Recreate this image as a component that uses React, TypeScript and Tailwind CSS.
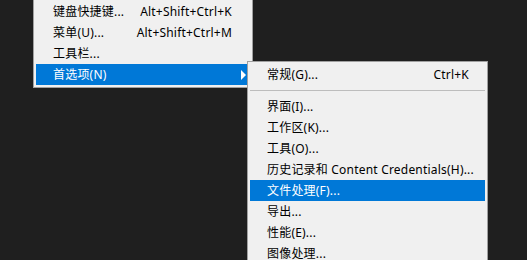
import React from 'react';

interface Item {
  label: string;
  shortcut?: string;
  active?: boolean;
  submenu?: boolean;
  separator?: boolean;
}

const mainItems: Item[] = [
  { label: '键盘快捷键...', shortcut: 'Alt+Shift+Ctrl+K' },
  { label: '菜单(U)...', shortcut: 'Alt+Shift+Ctrl+M' },
  { label: '工具栏...' },
  { label: '首选项(N)', active: true, submenu: true },
];

const prefItems: Item[] = [
  { label: '常规(G)...', shortcut: 'Ctrl+K' },
  { label: '', separator: true },
  { label: '界面(I)...' },
  { label: '工作区(K)...' },
  { label: '工具(O)...' },
  { label: '历史记录和 Content Credentials(H)...' },
  { label: '文件处理(F)...', active: true },
  { label: '导出...' },
  { label: '性能(E)...' },
  { label: '图像处理...' },
];

const MenuRow = ({ item, padRight }: { item: Item; padRight: string }) => {
  if (item.separator) {
    return (
      <div className="flex h-[11px] items-center">
        <div className="h-px w-full bg-[#bdbdbd]" />
      </div>
    );
  }
  return (
    <div
      className={`flex h-[21px] items-center pl-[17px] leading-[21px] ${
        item.active ? 'bg-[#0078d7] text-white' : 'text-black'
      } ${item.submenu ? 'pr-[4px]' : padRight}`}
    >
      <span className="whitespace-nowrap">{item.label}</span>
      <span className="ml-auto whitespace-nowrap">{item.shortcut}</span>
      {item.submenu && (
        <svg width="5" height="10" viewBox="0 0 5 10" className="ml-auto">
          <path d="M0 0 L5 5 L0 10 Z" fill="currentColor" />
        </svg>
      )}
    </div>
  );
};

const App = () => {
  return (
    <div
      className="relative h-[260px] w-[527px] overflow-hidden bg-[#1f1f1f] text-[12px] tracking-[0.2px]"
      style={{ fontFamily: '"Noto Sans", "Noto Sans CJK SC", sans-serif' }}
    >
      {/* Меню "Редактирование" (верх обрезан) */}
      <div className="ml-[33px] w-[220px] border-x border-b border-[#a0a0a0] bg-[#f0f0f0] px-[2px] pt-[1px] pb-[2px]">
        {mainItems.map((item, i) => (
          <MenuRow key={i} item={item} padRight="pr-[18px]" />
        ))}
      </div>

      {/* Подменю "Настройки" */}
      <div className="absolute left-[247px] top-[61px] w-[241px] border border-[#a0a0a0] bg-[#f0f0f0] p-[2px]">
        {prefItems.map((item, i) => (
          <MenuRow key={i} item={item} padRight="pr-[16px]" />
        ))}
      </div>
    </div>
  );
};

export default App;
